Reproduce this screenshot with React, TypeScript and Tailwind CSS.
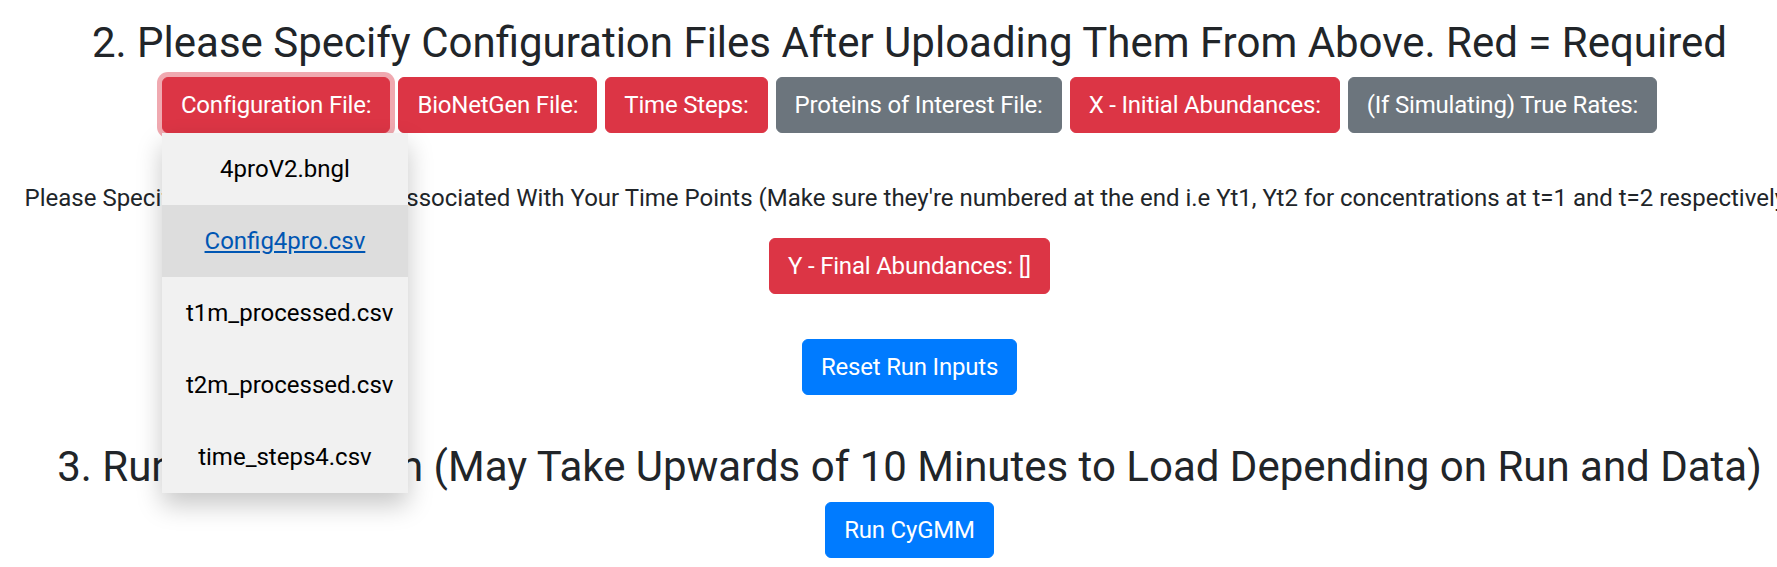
const files = ["4proV2.bngl", "Config4pro.csv", "t1m_processed.csv", "t2m_processed.csv", "time_steps4.csv"];

const btn = "rounded-[6px] border px-[18px] py-[9px] text-[24px] leading-[36px] tracking-[-0.2px] text-white whitespace-nowrap";
const red = `${btn} border-[#dc3545] bg-[#dc3545]`;
const gray = `${btn} border-[#6c757d] bg-[#6c757d]`;
const blue = `${btn} border-[#007bff] bg-[#007bff]`;

export default function App() {
  return (
    <div className="w-full h-[567px] overflow-hidden bg-white font-['Roboto',sans-serif] text-[#212529]">
      <div className="w-[1819px] text-center">
        <h3 className="mt-[18px] mb-[9px] text-[42px] leading-[1.2] font-normal">
          2. Please Specify Configuration Files After Uploading Them From Above. Red = Required
        </h3>

        {/* file pickers */}
        <div className="flex justify-center gap-[8px]">
          <div className="relative">
            <button className={`${red} shadow-[0_0_0_5px_rgba(225,83,97,0.5)]`}>Configuration File:</button>
            <div className="absolute left-0 top-full z-10 w-[246px] bg-[#f1f1f1] shadow-[0_12px_24px_rgba(0,0,0,0.22)]">
              {files.map((f, i) => (
                <a
                  key={f}
                  className={
                    i === 1
                      ? "block px-[24px] py-[18px] text-[24px] leading-[36px] bg-[#ddd] text-[#0056b3] underline"
                      : "block px-[24px] py-[18px] text-[24px] leading-[36px] text-black"
                  }
                >
                  {f}
                </a>
              ))}
            </div>
          </div>
          <button className={red}>BioNetGen File:</button>
          <button className={red}>Time Steps:</button>
          <button className={gray}>Proteins of Interest File:</button>
          <button className={red}>X - Initial Abundances:</button>
          <button className={gray}>(If Simulating) True Rates:</button>
        </div>

        <p className="mt-[47px] text-[24px] leading-[36px] whitespace-nowrap">
          Please Specify Your Y Result Files Associated With Your Time Points (Make sure they're numbered at the end i.e Yt1,
          Yt2 for concentrations at t=1 and t=2 respectively)
        </p>

        <div className="mt-[22px] flex justify-center">
          <button className={red}>Y - Final Abundances: []</button>
        </div>

        <div className="mt-[45px] flex justify-center">
          <button className={blue}>Reset Run Inputs</button>
        </div>

        <h3 className="mt-[47px] mb-[9px] text-[42px] leading-[1.2] font-normal">
          3. Run Optimization (May Take Upwards of 10 Minutes to Load Depending on Run and Data)
        </h3>
        <div className="flex justify-center">
          <button className={blue}>Run CyGMM</button>
        </div>
      </div>
    </div>
  );
}
